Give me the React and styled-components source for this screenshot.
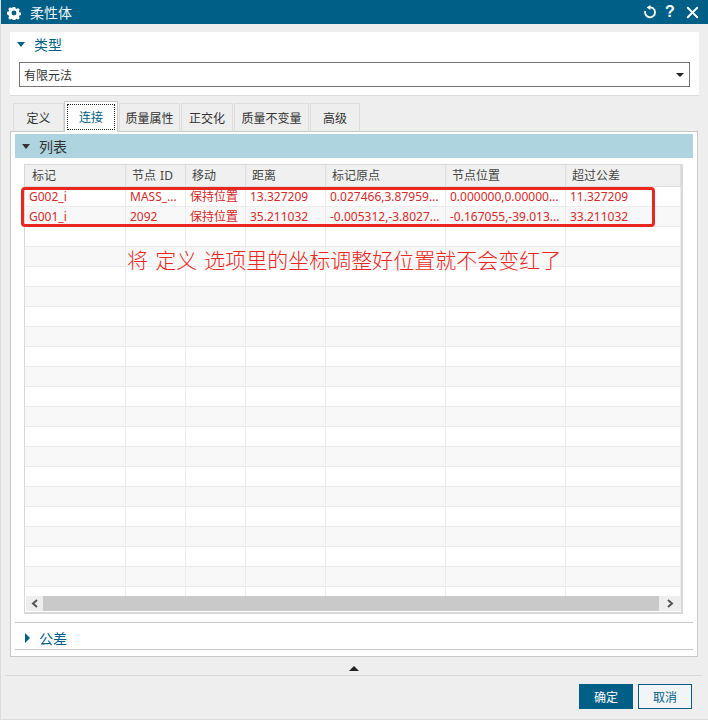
import React from 'react'
import styled, { createGlobalStyle } from 'styled-components'
import { X } from 'lucide-react'

const UI_FONT = '"Noto Sans", "Noto Sans CJK SC", sans-serif'

const GlobalStyle = createGlobalStyle`
  html, body { margin: 0; padding: 0; background: #eeeeee; }
  * { box-sizing: border-box; }
  body { font-family: ${UI_FONT}; font-size: 12px; color: #333; }
`

const Dialog = styled.div`
  width: 708px;
  height: 720px;
  background: #eeeeee;
  border-left: 1px solid #dcdcdc;
  border-bottom: 1px solid #dcdcdc;
  display: flex;
  flex-direction: column;
  overflow: hidden;
`
const TitleBar = styled.div`
  height: 24px;
  margin-left: -1px;
  flex: none;
  background: #005f87;
  color: #fff;
  display: flex;
  align-items: center;
  padding: 1px 6px 0 7px;
`
const Title = styled.span`
  font-size: 14px;
  line-height: 23px;
  margin-left: 9px;
  flex: 1;
  color: #eef5f8;
`
const TitleActions = styled.div`
  display: flex;
  align-items: center;
  gap: 7px;
  margin-top: -1px;
`
const HelpMark = styled.span`
  font-family: "Liberation Sans", sans-serif;
  font-weight: 700;
  font-size: 16px;
  line-height: 24px;
  width: 12px;
  text-align: center;
`
const Body = styled.div`
  flex: 1;
  padding: 8px 9px 0 9px;
  display: flex;
  flex-direction: column;
`
const TypePanel = styled.section`
  height: 64px;
  background: #fff;
  border-bottom: 1px solid #dcdcdc;
  padding: 1px 9px 0 9px;
  flex: none;
`
const SectionHead = styled.div`
  display: flex;
  align-items: center;
  height: ${p => p.$h || 22}px;
  gap: 9px;
  font-size: 14px;
  color: ${p => p.$dark ? '#333' : '#005f87'};
  padding-left: ${p => p.$inset || 0}px;
`
const TypeHead = styled(SectionHead)`
  margin-left: -2px;
`
const Arrow = styled.i`
  width: 0;
  height: 0;
  flex: none;
  display: block;
  ${p => p.$dir === 'right'
    ? `border-top: 5px solid transparent; border-bottom: 5px solid transparent; border-left: 5px solid ${p.$color};`
    : `border-left: 4.5px solid transparent; border-right: 4.5px solid transparent; border-top: 5px solid ${p.$color};`}
`
const Combo = styled.div`
  height: 25px;
  margin-top: 7px;
  border: 1px solid #767676;
  background: #fff;
  display: flex;
  align-items: center;
  justify-content: space-between;
  padding: 0 4px;
  color: #333;
`
const ComboCaret = styled.i`
  width: 0;
  height: 0;
  border-left: 4px solid transparent;
  border-right: 4px solid transparent;
  border-top: 4px solid #222;
  margin-right: 1px;
`
const TabBar = styled.div`
  display: flex;
  align-items: flex-end;
  height: 36px;
  padding-left: 3px;
  flex: none;
  position: relative;
  z-index: 1;
  margin-bottom: -1px;
`
const Tab = styled.div`
  width: ${p => p.$w}px;
  height: ${p => p.$active ? 31 : 29}px;
  margin-right: ${p => p.$gap ?? 1}px;
  background: ${p => p.$active ? '#fff' : '#eeeeee'};
  border: 1px solid ${p => p.$active ? '#c8c8c8' : '#dddddd'};
  border-bottom: ${p => p.$active ? 'none' : '1px solid #c8c8c8'};
  color: ${p => p.$active ? '#005f87' : '#333'};
  display: flex;
  align-items: center;
  justify-content: center;
  padding: ${p => p.$active ? '2px' : '0'};
`
const FocusRing = styled.span`
  flex: 1;
  align-self: stretch;
  border: 1px dotted #222;
  display: flex;
  align-items: center;
  justify-content: center;
`
const TabPanel = styled.section`
  height: 526px;
  width: 688px;
  background: #fff;
  border: 1px solid #c8c8c8;
  padding: 2px 4px 0 4px;
  flex: none;
`
const ListHead = styled(SectionHead)`
  background: #add4df;
  padding-left: 7px;
`
const GridBox = styled.div`
  position: relative;
  margin: 6px 10px 0 9px;
  height: 450px;
  border: 1px solid #d8d8d8;
  border-width: 1px 2px 2px 1px;
  display: flex;
  flex-direction: column;
  background: #fff;
`
const HeaderRow = styled.div`
  display: grid;
  grid-template-columns: 101px 60px 60px 80px 120px 120px 1fr;
  height: 22px;
  flex: none;
  background: #f0f0f0;
  border-bottom: 1px solid #dedede;
`
const HeaderCell = styled.div`
  padding-left: ${p => p.$pad}px;
  line-height: 22px;
  color: #444;
  border-right: 1px solid #dedede;
  white-space: nowrap;
  word-spacing: 1px;
`
const RowsArea = styled.div`
  flex: 1;
  overflow: hidden;
`
const Row = styled.div`
  display: grid;
  grid-template-columns: 101px 60px 60px 80px 120px 120px 1fr;
  height: 20px;
  background: ${p => p.$odd ? '#f8f8f8' : '#fff'};
  border-bottom: 1px solid #ececec;
`
const Cell = styled.div`
  padding-left: 4px;
  line-height: 20px;
  color: #d42a2a;
  border-right: 1px solid #ececec;
  white-space: nowrap;
  overflow: hidden;
`
const ScrollBar = styled.div`
  height: 15px;
  flex: none;
  margin: 0 0 1px 1px;
  display: flex;
  background: #eee;
`
const ScrollButton = styled.div`
  width: ${p => p.$w}px;
  flex: none;
  display: flex;
  align-items: center;
  justify-content: center;
`
const ScrollThumb = styled.div`
  flex: 1;
  background: #c9c9c9;
`
const Annotation = styled.div`
  position: absolute;
  left: -4px;
  top: 22px;
  width: 634px;
  height: 40px;
  border: 3px solid #e8281e;
  border-radius: 4px;
  pointer-events: none;
`
const Note = styled.div`
  position: absolute;
  left: 102px;
  top: 79px;
  font-family: "Noto Sans CJK SC", sans-serif;
  font-weight: 300;
  font-size: 21px;
  word-spacing: 2.5px;
  line-height: 30px;
  color: #e8281e;
  white-space: pre;
`
const TolSection = styled(SectionHead)`
  margin-top: 8px;
  padding-top: 3px;
  border-top: 1px solid #c8c8c8;
  border-bottom: 1px solid #c8c8c8;
`
const CollapseStrip = styled.div`
  height: 18px;
  flex: none;
  display: flex;
  align-items: center;
  justify-content: center;
  padding: 4px 2px 0 0;
`
const CollapseArrow = styled.i`
  width: 0;
  height: 0;
  border-left: 5px solid transparent;
  border-right: 5px solid transparent;
  border-bottom: 5px solid #222;
`
const Footer = styled.div`
  margin: 0 -3px 0 -5px;
  border-top: 1px solid #d8d8d8;
  padding: 8px 10px 0 0;
  display: flex;
  justify-content: flex-end;
  gap: 5px;
`
const Button = styled.button`
  width: 54px;
  height: 25px;
  font: inherit;
  padding: 0;
  border: 1px solid #005f87;
  background: ${p => p.$primary ? '#005f87' : '#f2f5f6'};
  color: ${p => p.$primary ? '#fff' : '#005f87'};
`

const tabs = [
  { label: '定义', w: 51, gap: 0 },
  { label: '连接', w: 54, active: true },
  { label: '质量属性', w: 61 },
  { label: '正交化', w: 52 },
  { label: '质量不变量', w: 75 },
  { label: '高级', w: 50 },
]

const columns = ['标记', '节点 ID', '移动', '距离', '标记原点', '节点位置', '超过公差']

const rows = [
  ['G002_i', 'MASS_...', '保持位置', '13.327209', '0.027466,3.87959...', '0.000000,0.00000...', '11.327209'],
  ['G001_i', '2092', '保持位置', '35.211032', '-0.005312,-3.8027...', '-0.167055,-39.013...', '33.211032'],
]

const emptyRows = Array.from({ length: 19 }, () => ['', '', '', '', '', '', ''])

const GearIcon = () => (
  <svg width="14" height="14" viewBox="0 0 16 16">
    <path
      fill="#fff"
      fillRule="evenodd"
      d="M6.6 1h2.8l.4 1.9 1.2.5 1.6-1 2 2-1 1.6.5 1.2 1.9.4v2.8l-1.9.4-.5 1.2 1 1.6-2 2-1.6-1-1.2.5-.4 1.9H6.6l-.4-1.9-1.2-.5-1.6 1-2-2 1-1.6-.5-1.2L0 9.4V6.6l1.9-.4.5-1.2-1-1.6 2-2 1.6 1 1.2-.5zM8 5.2a2.8 2.8 0 1 0 0 5.6 2.8 2.8 0 0 0 0-5.6z"
    />
  </svg>
)

const ResetIcon = () => (
  <svg width="14" height="14" viewBox="0 0 14 14" fill="none">
    <path d="M6 2.4A5 5 0 1 1 2.2 6" stroke="#fff" strokeWidth="1.8" />
    <path d="M7.4 0v5L3.6 2.5z" fill="#fff" />
  </svg>
)

const ChevronIcon = ({ right }) => (
  <svg width="8" height="9" viewBox="0 0 8 9" fill="none">
    <path d={right ? 'M2 1l4 3.5L2 8' : 'M6 1L2 4.5 6 8'} stroke="#555" strokeWidth="2" />
  </svg>
)

export default function App() {
  return (
    <Dialog>
      <GlobalStyle />
      <TitleBar>
        <GearIcon />
        <Title>柔性体</Title>
        <TitleActions>
          <ResetIcon />
          <HelpMark>?</HelpMark>
          <X size={19} strokeWidth={2.4} color="#fff" />
        </TitleActions>
      </TitleBar>
      <Body>
        <TypePanel>
          <TypeHead>
            <Arrow $color="#005f87" />
            类型
          </TypeHead>
          <Combo>
            有限元法
            <ComboCaret />
          </Combo>
        </TypePanel>
        <TabBar>
          {tabs.map(t => (
            <Tab key={t.label} $w={t.w} $active={t.active} $gap={t.gap}>
              {t.active ? <FocusRing>{t.label}</FocusRing> : t.label}
            </Tab>
          ))}
        </TabBar>
        <TabPanel>
          <ListHead $h={24} $dark>
            <Arrow $color="#333" />
            列表
          </ListHead>
          <GridBox>
            <HeaderRow>
              {columns.map((c, i) => <HeaderCell key={c} $pad={i === 0 ? 7 : 6}>{c}</HeaderCell>)}
            </HeaderRow>
            <RowsArea>
              {[...rows, ...emptyRows].map((r, i) => (
                <Row key={i} $odd={i % 2 === 1}>
                  {r.map((v, j) => <Cell key={j}>{v}</Cell>)}
                </Row>
              ))}
            </RowsArea>
            <ScrollBar>
              <ScrollButton $w={17}><ChevronIcon /></ScrollButton>
              <ScrollThumb />
              <ScrollButton $w={22}><ChevronIcon right /></ScrollButton>
            </ScrollBar>
            <Annotation />
            <Note>将 定义 选项里的坐标调整好位置就不会变红了</Note>
          </GridBox>
          <TolSection $h={28} $inset={10}>
            <Arrow $dir="right" $color="#005f87" />
            公差
          </TolSection>
        </TabPanel>
        <CollapseStrip><CollapseArrow /></CollapseStrip>
        <Footer>
          <Button $primary>确定</Button>
          <Button>取消</Button>
        </Footer>
      </Body>
    </Dialog>
  )
}
